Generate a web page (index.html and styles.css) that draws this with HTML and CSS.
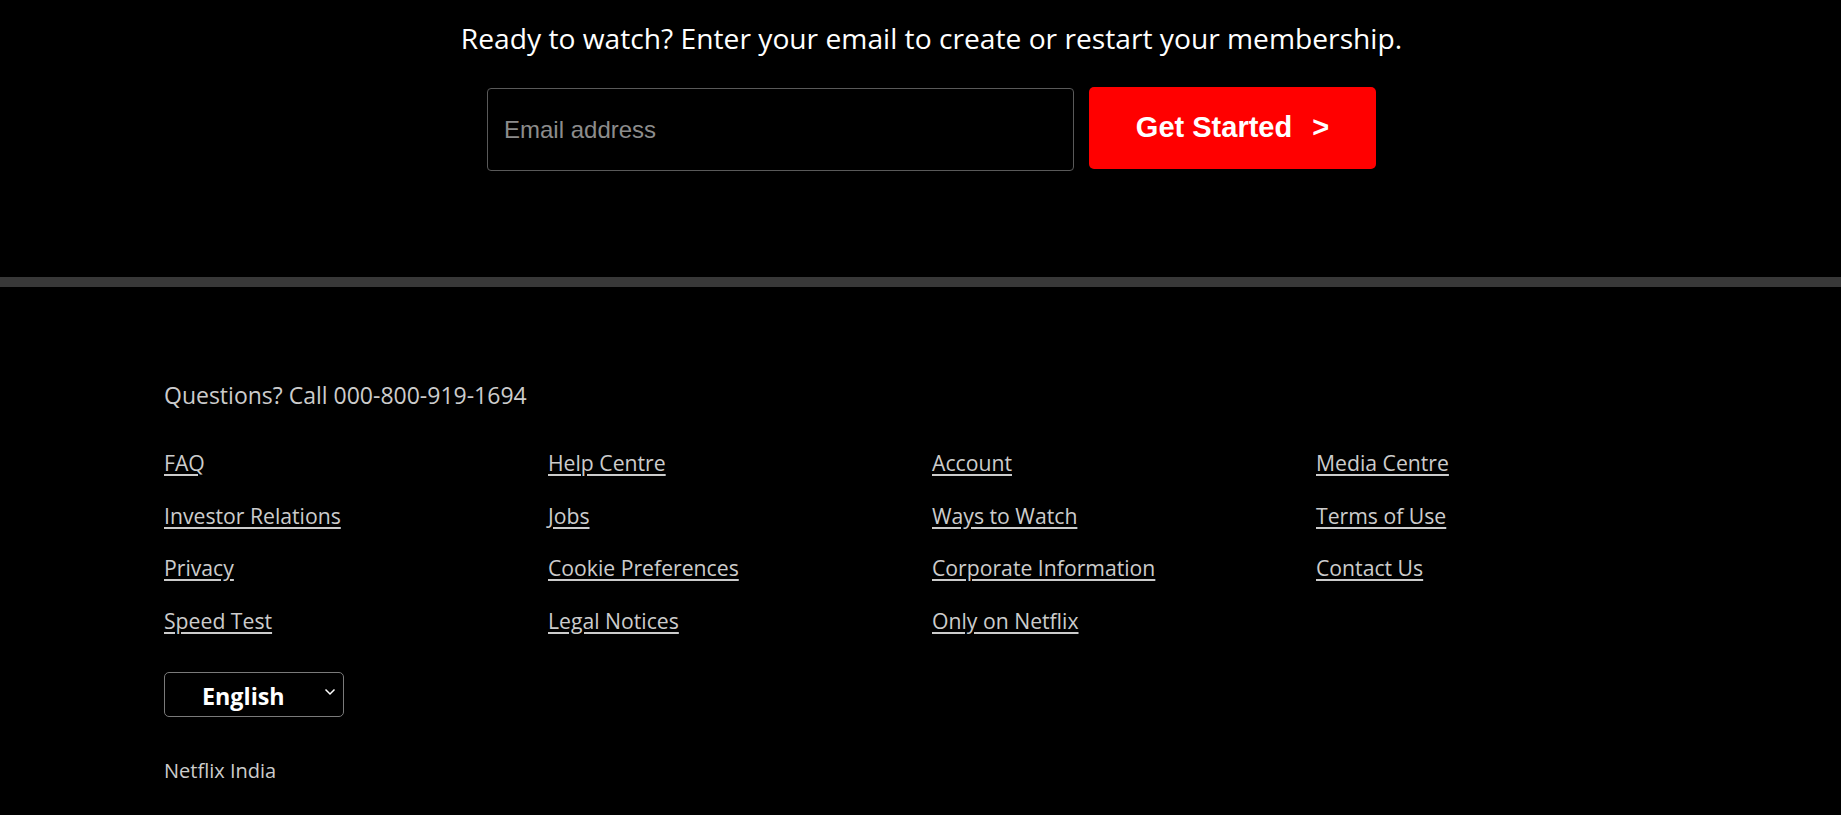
FILE: index.html
```html
<!DOCTYPE html>
<html lang="en">
<head>
<meta charset="utf-8">
<title>Netflix India</title>
<link rel="stylesheet" href="styles.css">
</head>
<body>
<section class="cta">
  <h3 class="cta-title">Ready to watch? Enter your email to create or restart your membership.</h3>
  <form class="cta-form">
    <input class="email" type="email" placeholder="Email address">
    <button class="start" type="button">Get Started <span class="arrow">&gt;</span></button>
  </form>
</section>
<footer class="footer">
  <p class="phone">Questions? Call 000-800-919-1694</p>
  <ul class="links">
    <li><a href="#">FAQ</a></li>
    <li><a href="#">Help Centre</a></li>
    <li><a href="#">Account</a></li>
    <li><a href="#">Media Centre</a></li>
    <li><a href="#">Investor Relations</a></li>
    <li><a href="#">Jobs</a></li>
    <li><a href="#">Ways to Watch</a></li>
    <li><a href="#">Terms of Use</a></li>
    <li><a href="#">Privacy</a></li>
    <li><a href="#">Cookie Preferences</a></li>
    <li><a href="#">Corporate Information</a></li>
    <li><a href="#">Contact Us</a></li>
    <li><a href="#">Speed Test</a></li>
    <li><a href="#">Legal Notices</a></li>
    <li><a href="#">Only on Netflix</a></li>
  </ul>
  <div class="lang">
    <span class="lang-label">English</span>
    <svg class="chev" width="12" height="8" viewBox="0 0 12 8"><path d="M1.5 1.5 L6 6 L10.5 1.5" fill="none" stroke="#fff" stroke-width="1.5"/></svg>
  </div>
  <p class="country">Netflix India</p>
</footer>
</body>
</html>
```
FILE: styles.css
```css
* { box-sizing: border-box; }
html, body { margin: 0; padding: 0; background: #000; }
body { font-family: "Open Sans", "Noto Sans", sans-serif; color: #fff; }

.cta {
  padding: 18px 0 106px 22px;
  display: flex;
  flex-direction: column;
  align-items: center;
}
.cta-title {
  margin: 0;
  font-size: 28.2px;
  font-weight: 400;
  line-height: 40px;
  color: #fff;
}
.cta-form {
  margin: 29px 0 0;
  display: flex;
  align-items: flex-start;
  gap: 15px;
}
.email {
  width: 587px;
  height: 83px;
  margin-top: 1px;
  background: #000;
  border: 1px solid #595959;
  border-radius: 4px;
  padding: 0 16px;
  color: #fff;
  font-family: "Liberation Sans", Arial, sans-serif;
  font-size: 24px;
  outline: none;
}
.email::placeholder { color: #8c8c8c; }
.start {
  width: 287px;
  height: 82px;
  background: #ff0000;
  border: none;
  border-radius: 5px;
  color: #fff;
  font-family: "Liberation Sans", Arial, sans-serif;
  font-size: 29px;
  font-weight: 700;
  display: flex;
  align-items: center;
  justify-content: center;
  padding: 0 0 2px;
}
.arrow { margin-left: 20px; }

.footer {
  border-top: 10px solid #383838;
  padding: 95px 0 40px 164px;
  color: #cccccc;
}
.phone {
  margin: 0;
  font-size: 23px;
  line-height: 26px;
}
.links {
  list-style: none;
  margin: 42px 0 0;
  padding: 0;
  display: grid;
  grid-template-columns: repeat(4, 384px);
  row-gap: 26.5px;
}
.links li { line-height: 26px; font-size: 21.2px; }
.links a { color: #cccccc; text-decoration: underline; text-underline-offset: 3px; }

.lang {
  margin-top: 38px;
  width: 180px;
  height: 45px;
  border: 1px solid #7a7a7a;
  border-radius: 5px;
  display: flex;
  align-items: center;
  padding: 0 7px 0 37px;
  justify-content: space-between;
}
.lang-label {
  font-size: 23.3px;
  font-weight: 700;
  color: #fff;
  padding-top: 3px;
}
.chev { margin-top: -4px; }
.country {
  margin: 41px 0 0;
  font-size: 20px;
  line-height: 26px;
}
```
